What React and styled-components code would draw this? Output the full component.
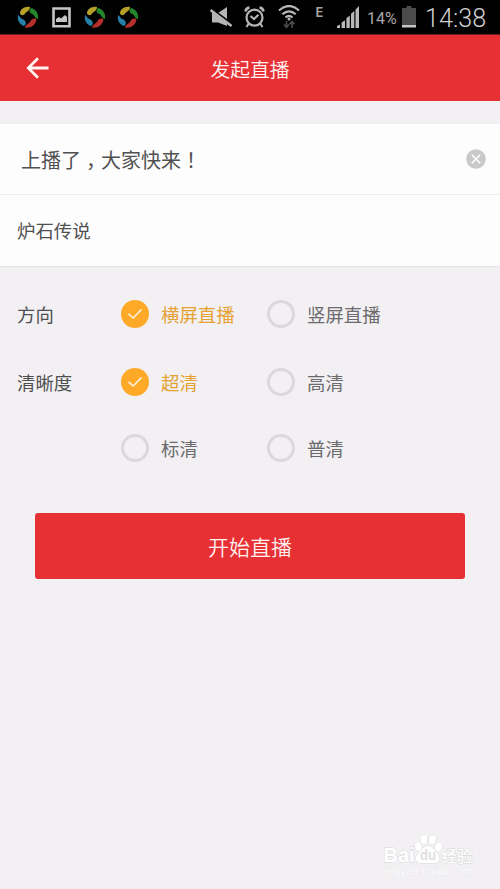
import React from "react";
import styled, { createGlobalStyle } from "styled-components";

const GlobalStyle = createGlobalStyle`
  * { box-sizing: border-box; }
  body {
    margin: 0;
    background: #f2f0f3;
    font-family: "Noto Sans CJK SC", "Noto Sans", sans-serif;
  }
  svg { display: block; flex: none; }
`;

const Screen = styled.div`
  display: flex;
  flex-direction: column;
  width: 500px;
  height: 889px;
  overflow: hidden;
  background: #f2f0f3;
`;

const StatusBar = styled.div`
  display: flex;
  align-items: flex-start;
  flex: none;
  height: 35px;
  padding: 5px 14px 0 17px;
  background: #010101;
  border-bottom: 1px solid #6c2024;
  color: #b9b9b9;
  font-family: Roboto, sans-serif;
`;

const Slot = styled.div`
  flex: none;
  width: ${(p) => p.$width}px;
  margin-left: ${(p) => p.$gap || 0}px;
  white-space: nowrap;
`;

const NetworkType = styled(Slot)`
  font: 600 15px/13px "Open Sans", sans-serif;
  color: #a5a5a5;
`;

const BatteryText = styled(Slot)`
  font-size: 16px;
  line-height: 27px;
  color: #a8a8a8;
`;

const Clock = styled(Slot)`
  font-size: 25.2px;
  line-height: 28px;
  font-weight: 300;
  color: #d0d0d0;
`;

const Header = styled.header`
  display: grid;
  grid-template-columns: 75px 1fr 75px;
  align-items: center;
  flex: none;
  height: 66px;
  background: #e73034;
`;

const BackButton = styled.div`
  padding-left: 25px;
`;

const Title = styled.h1`
  margin: 0;
  padding-top: 1px;
  text-align: center;
  font-size: 19.8px;
  line-height: 28px;
  font-weight: 350;
  color: #fff3f2;
`;

const Form = styled.div`
  flex: none;
  margin-top: 23px;
  background: #fefdfe;
  border-bottom: 1px solid #e7e5e8;
`;

const Field = styled.div`
  display: flex;
  align-items: center;
  justify-content: space-between;
  height: ${(p) => p.$height}px;
  padding: ${(p) => p.$padding};
  font-size: ${(p) => p.$size}px;
  line-height: 30px;
  color: #505050;
  & + & { border-top: 1px solid #eeecef; }
`;

const FieldText = styled.span`
  padding-top: 2px;
`;

const Mark = styled.span`
  display: inline-block;
  width: 20px;
  text-align: center;
  font-feature-settings: "halt";
`;

const Options = styled.div`
  flex: none;
  padding: 13px 0 0 17px;
`;

const OptionRow = styled.div`
  display: grid;
  grid-template-columns: 103.5px 146px 150px;
  align-items: center;
  height: ${(p) => p.$height || 68}px;
  font-size: 18.4px;
  line-height: 26px;
`;

const Label = styled.div`
  padding-bottom: 1px;
  color: #4f4e50;
`;

const Choice = styled.div`
  display: flex;
  align-items: center;
  gap: 12.5px;
  color: ${(p) => (p.$on ? "#e5a233" : "#6b6a6c")};
`;

const ChoiceText = styled.span`
  padding-bottom: 1px;
`;

const Radio = styled.div`
  display: grid;
  place-items: center;
  width: 28px;
  height: 28px;
  border-radius: 50%;
  border: ${(p) => (p.$on ? "none" : "3px solid #dad8db")};
  background: ${(p) => (p.$on ? "#fea928" : "transparent")};
`;

const StartButton = styled.button`
  flex: none;
  width: 430px;
  height: 66px;
  margin: 33px 35px 0;
  padding: 0;
  border: 0;
  border-radius: 3px;
  background: #e73034;
  color: #fff3f2;
  font: 350 21px/30px "Noto Sans CJK SC", sans-serif;
`;

const Footer = styled.footer`
  display: flex;
  justify-content: flex-end;
  margin-top: auto;
  padding: 0 25px 9px 0;
`;

const Swirl = () => (
  <svg width="22" height="23" viewBox="0 0 22 23">
    <path d="M3 8.5C3 4 8 1 13 2C13 6 10 6 8 8.5C7 11 4 10.5 3 8.5Z" fill="#b5a127" />
    <path d="M14 3C19 4 22 9 21 14C18 13.5 18 11 15.5 9C12 8 12 5 14 3Z" fill="#24852a" />
    <path d="M19.5 15C18 21 13 23.5 8 22.5C9 19 12 19 13.5 16C15.5 13 19 13 19.5 15Z" fill="#b42f2c" />
    <path d="M1 10C3 11 3 13.5 6.5 14.5C9.5 16.5 9.5 20 7 21C2 19 0 15 1 10Z" fill="#277fa5" />
  </svg>
);

const Picture = () => (
  <svg width="19" height="23" viewBox="0 0 19 23">
    <path d="M1.5 3.5H17.5V21.3H1.5Z" fill="none" stroke="#c5c5c5" strokeWidth="2.6" />
    <path d="M4 17V14L7 12L9 13.5L13 10L15 12V17Z" fill="#c5c5c5" />
  </svg>
);

const Mute = () => (
  <svg width="22" height="24" viewBox="0 0 22 24">
    <path d="M2 8H8L17 2V21L8 17.5H2Z" fill="#b5b5b5" />
    <path d="M0 3.6L22 20" stroke="#010101" strokeWidth="3.6" />
    <path d="M0.5 5L21.5 21" stroke="#b5b5b5" strokeWidth="2.6" />
  </svg>
);

const Alarm = () => (
  <svg width="22" height="24" viewBox="0 0 22 24" fill="none" stroke="#b5b5b5" strokeWidth="2.2">
    <circle cx="10.5" cy="12.7" r="8" />
    <path d="M1.5 6.5Q2 3 5.5 2.5M15.5 2.5Q19 3 19.5 6.5" strokeWidth="2.6" />
    <path d="M6.5 11L10 14L14.5 9.8M4.8 18.5L2.5 22M16.2 18.5L18.5 22" />
  </svg>
);

const Wifi = () => (
  <svg width="22" height="24" viewBox="0 0 22 24" fill="none">
    <path d="M1 5.5Q11-3.5 21 5.5M4.3 9.3Q11 3.3 17.7 9.3M7.5 12.5Q11 9.5 14.5 12.5" stroke="#b8b8b8" strokeWidth="2.2" />
    <circle cx="11" cy="14.2" r="1.4" fill="#b8b8b8" />
    <path d="M8.5 16V22M6 19.5L8.5 22.3L11 19.5M14 23V17M11.5 19.3L14 16.5L16.5 19.3" stroke="#4d4d4d" strokeWidth="1.6" />
  </svg>
);

const Signal = () => (
  <svg width="22" height="24" viewBox="0 0 22 24" fill="#b9b9b9">
    <path d="M0 23V21L3 19.5V23ZM4.6 23V17.5L8 15.2V23ZM9.4 23V13.3L12.8 10.4V23ZM14 23V8.7L17.3 6V23ZM18.5 23V4.5L22 1V23Z" />
  </svg>
);

const Battery = () => (
  <svg width="14" height="24" viewBox="0 0 14 24">
    <path d="M0 3H4.5V1H9.5V3H14V20H0Z" fill="#4b4b4b" />
    <path d="M0 20H14V22.5H0Z" fill="#c5c5c5" />
  </svg>
);

const BackArrow = () => (
  <svg width="26" height="24" viewBox="0 0 26 24" fill="none" stroke="#fff4f2" strokeWidth="2.8">
    <path d="M23.5 12H3M13 2.2L3.3 12L13 21.8" />
  </svg>
);

const Clear = () => (
  <svg width="20" height="20" viewBox="0 0 20 20">
    <circle cx="10" cy="10" r="9.8" fill="#c9c8ca" />
    <path d="M5.8 5.8L14.2 14.2M14.2 5.8L5.8 14.2" stroke="#fff" strokeWidth="1.6" />
  </svg>
);

const Tick = () => (
  <svg width="16" height="12" viewBox="0 0 16 12">
    <path d="M1.5 5.8L6.2 10L14.5 1.5" fill="none" stroke="#fff4df" strokeWidth="1.6" />
  </svg>
);

const Watermark = () => (
  <svg width="92" height="46" viewBox="0 0 92 46" fill="#fff" stroke="#d6d4d8" strokeWidth="0.8" paintOrder="stroke">
    <text x="0.5" y="28" fontFamily="Liberation Sans, sans-serif" fontWeight="bold" fontSize="20" textLength="31" lengthAdjust="spacingAndGlyphs">Bai</text>
    <ellipse cx="35.5" cy="12.5" rx="3.3" ry="4.4" transform="rotate(-20 35.5 12.5)" />
    <ellipse cx="41" cy="5.5" rx="3.5" ry="4.8" />
    <ellipse cx="49.5" cy="5.5" rx="3.5" ry="4.8" transform="rotate(10 49.5 5.5)" />
    <ellipse cx="55.5" cy="13" rx="3.3" ry="4.4" transform="rotate(20 55.5 13)" />
    <path d="M45 12C49 12 50 15 54 18.5C58 23 57 29 51 29H38C32 29 31 23 36 18.5C40 15 40 12 45 12Z" />
    <text x="37" y="26" fontFamily="Liberation Sans, sans-serif" fontWeight="bold" fontSize="14" textLength="16" lengthAdjust="spacingAndGlyphs" fill="#e0dee2" stroke="none">du</text>
    <text x="58.5" y="27.5" fontFamily="Noto Sans CJK SC, sans-serif" fontWeight="500" fontSize="15.5" textLength="31">经验</text>
    <text x="0" y="41" fontFamily="Liberation Sans, sans-serif" fontSize="10.5" textLength="90" stroke="#e2e0e4" strokeWidth="0.5">jingyan.baidu.com</text>
  </svg>
);

const Option = ({ on, children }) => (
  <Choice $on={on}>
    <Radio $on={on}>{on && <Tick />}</Radio>
    <ChoiceText>{children}</ChoiceText>
  </Choice>
);

export default function App() {
  return (
    <>
      <GlobalStyle />
      <Screen>
        <StatusBar>
          <Slot $width={22}><Swirl /></Slot>
          <Slot $width={19} $gap={13}><Picture /></Slot>
          <Slot $width={22} $gap={13}><Swirl /></Slot>
          <Slot $width={22} $gap={11}><Swirl /></Slot>
          <Slot $width={22} $gap={71}><Mute /></Slot>
          <Slot $width={22} $gap={12}><Alarm /></Slot>
          <Slot $width={22} $gap={12}><Wifi /></Slot>
          <NetworkType $width={9} $gap={15}>E</NetworkType>
          <Slot $width={22} $gap={13}><Signal /></Slot>
          <BatteryText $width={31} $gap={8}>14%</BatteryText>
          <Slot $width={14} $gap={4}><Battery /></Slot>
          <Clock $width={62} $gap={9}>14:38</Clock>
        </StatusBar>
        <Header>
          <BackButton><BackArrow /></BackButton>
          <Title>发起直播</Title>
        </Header>
        <Form>
          <Field $height={70} $padding="0 14px 0 21px" $size={20}>
            <FieldText>上播了<Mark>，</Mark>大家快来<Mark>！</Mark></FieldText>
            <Clear />
          </Field>
          <Field $height={72} $padding="0 17px 2px" $size={18.4}>炉石传说</Field>
        </Form>
        <Options>
          <OptionRow>
            <Label>方向</Label>
            <Option on>横屏直播</Option>
            <Option>竖屏直播</Option>
          </OptionRow>
          <OptionRow>
            <Label>清晰度</Label>
            <Option on>超清</Option>
            <Option>高清</Option>
          </OptionRow>
          <OptionRow $height={64}>
            <Label />
            <Option>标清</Option>
            <Option>普清</Option>
          </OptionRow>
        </Options>
        <StartButton>开始直播</StartButton>
        <Footer><Watermark /></Footer>
      </Screen>
    </>
  );
}
